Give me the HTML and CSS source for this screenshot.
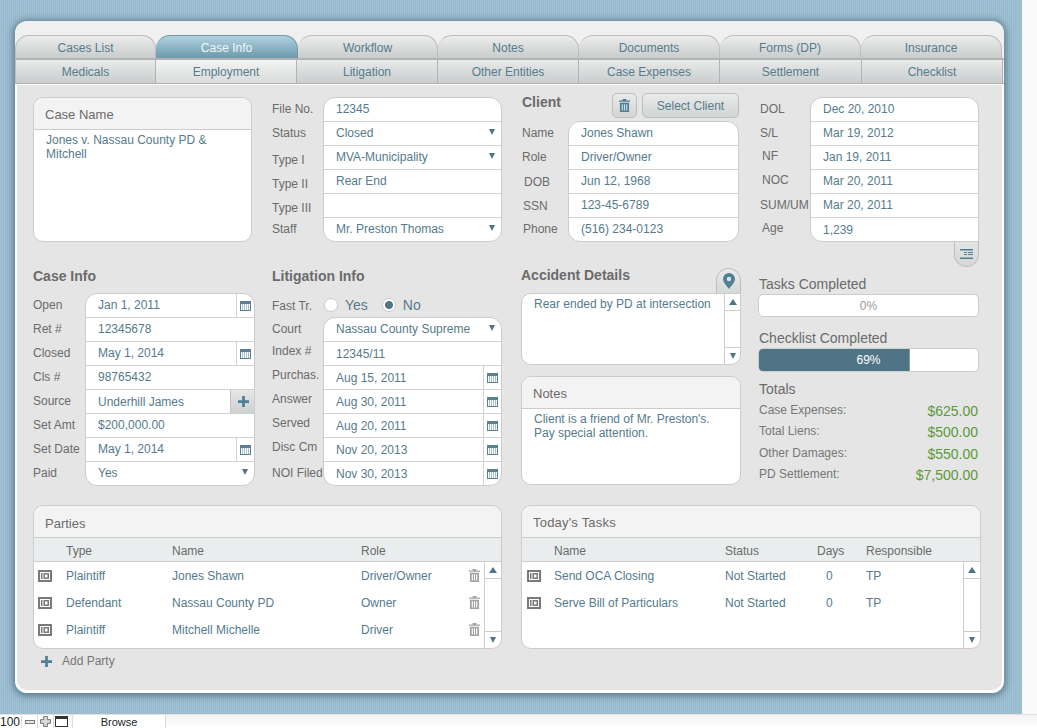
FILE: index.html
```html
<!DOCTYPE html>
<html lang="en">
<head>
<meta charset="utf-8">
<title>Case Info</title>
<link rel="stylesheet" href="styles.css">
</head>
<body>
<svg class="defs" width="0" height="0" aria-hidden="true">
  <symbol id="i-trash" viewBox="0 0 12 14"><path d="M4 0h4v1.5h4V3H0V1.5h4z"/><path fill-rule="evenodd" d="M1 4h10v10H1zM3 5.5v7h1.2v-7zM5.4 5.5v7h1.2v-7zM7.8 5.5v7H9v-7z"/></symbol>
  <symbol id="i-cal" viewBox="0 0 11 10"><path fill-rule="evenodd" d="M0 0h11v10H0zM1 3v6h9V3z"/><path d="M2 3.5h1v1H2zM4 3.5h1v1H4zM6 3.5h1v1H6zM8 3.5h1v1H8zM2 5.5h1v1H2zM4 5.5h1v1H4zM6 5.5h1v1H6zM8 5.5h1v1H8zM2 7.5h1v1H2zM4 7.5h1v1H4zM6 7.5h1v1H6zM8 7.5h1v1H8z"/></symbol>
  <symbol id="i-id" viewBox="0 0 14 12"><path fill-rule="evenodd" d="M0 0h14v12H0zM2 2v8h10V2zM3 3h1.5v6H3zM5.5 3H11v6H5.500zM7 4.500v3h2.500v-3z"/></symbol>
  <symbol id="i-plus" viewBox="0 0 12 12"><path d="M4.500 0h3v4.500H12v3H7.500V12h-3V7.500H0v-3h4.500z"/></symbol>
  <symbol id="i-pin" viewBox="0 0 12 16"><path fill-rule="evenodd" d="M6 0a6 6 0 0 1 6 6c0 3.500-4 7-6 10C4 13 0 9.500 0 6a6 6 0 0 1 6-6zM6 3.800a2.200 2.200 0 1 0 0 4.400 2.200 2.200 0 0 0 0-4.400z"/></symbol>
  <symbol id="i-lines" viewBox="0 0 13 10"><path d="M0 0h13v1.500H0zM4 3h3v1H4zM8 3h5v1H8zM4 5h3v1H4zM8 5h5v1H8zM0 8.500h13V10H0z"/></symbol>
</svg>

<div class="desktop">
  <main class="card">
    <nav class="tabs tabs-top">
      <a class="tab">Cases List</a>
      <a class="tab tab-on">Case Info</a>
      <a class="tab">Workflow</a>
      <a class="tab">Notes</a>
      <a class="tab">Documents</a>
      <a class="tab">Forms (DP)</a>
      <a class="tab">Insurance</a>
    </nav>
    <nav class="tabs tabs-sub">
      <a class="tab">Medicals</a>
      <a class="tab tab-near">Employment</a>
      <a class="tab">Litigation</a>
      <a class="tab">Other Entities</a>
      <a class="tab">Case Expenses</a>
      <a class="tab">Settlement</a>
      <a class="tab">Checklist</a>
    </nav>

    <div class="content">
      <section class="row-one">
        <div class="panel case-name">
          <header class="panel-head">Case Name</header>
          <p class="panel-text">Jones v. Nassau County PD &amp; Mitchell</p>
        </div>

        <div class="fields col-b1">
          <div class="labels">
            <span>File No.</span><span>Status</span><span class="d3">Type I</span><span class="d3">Type II</span><span class="d3">Type III</span><span>Staff</span>
          </div>
          <div class="stack">
            <div class="line"><span class="val">12345</span></div>
            <div class="line"><span class="val">Closed</span><i class="caret"></i></div>
            <div class="line"><span class="val">MVA-Municipality</span><i class="caret"></i></div>
            <div class="line"><span class="val">Rear End</span></div>
            <div class="line"></div>
            <div class="line"><span class="val">Mr. Preston Thomas</span><i class="caret"></i></div>
          </div>
        </div>

        <div class="client">
          <div class="client-head">
            <h2 class="heading">Client</h2>
            <button class="btn btn-icon"><svg class="ico-trash-btn"><use href="#i-trash"/></svg></button>
            <button class="btn btn-select">Select Client</button>
          </div>
          <div class="fields">
            <div class="labels labels-client">
              <span>Name</span><span>Role</span><span class="d1 in2">DOB</span><span class="d1 in1">SSN</span><span class="in1">Phone</span>
            </div>
            <div class="stack">
              <div class="line"><span class="val">Jones Shawn</span></div>
              <div class="line"><span class="val">Driver/Owner</span></div>
              <div class="line"><span class="val">Jun 12, 1968</span></div>
              <div class="line"><span class="val">123-45-6789</span></div>
              <div class="line"><span class="val">(516) 234-0123</span></div>
            </div>
          </div>
        </div>

        <div class="dates">
          <div class="fields">
            <div class="labels labels-dates">
              <span>DOL</span><span>S/L</span><span class="in2 u1">NF</span><span class="in2 u1">NOC</span><span>SUM/UM</span><span class="in2 u1">Age</span>
            </div>
            <div class="stack stack-square-br">
              <div class="line"><span class="val">Dec 20, 2010</span></div>
              <div class="line"><span class="val">Mar 19, 2012</span></div>
              <div class="line"><span class="val">Jan 19, 2011</span></div>
              <div class="line"><span class="val">Mar 20, 2011</span></div>
              <div class="line"><span class="val">Mar 20, 2011</span></div>
              <div class="line"><span class="val d1">1,239</span></div>
            </div>
          </div>
          <button class="hang-tab"><svg class="ico-lines"><use href="#i-lines"/></svg></button>
        </div>
      </section>

      <section class="row-two">
        <div>
          <h2 class="heading heading-sec">Case Info</h2>
          <div class="fields">
            <div class="labels labels-case">
              <span>Open</span><span>Ret #</span><span>Closed</span><span>Cls #</span><span>Source</span><span>Set Amt</span><span>Set Date</span><span>Paid</span>
            </div>
            <div class="stack">
              <div class="line line-side"><span class="val">Jan 1, 2011</span><span class="cell"><svg class="ico-cal"><use href="#i-cal"/></svg></span></div>
              <div class="line"><span class="val">12345678</span></div>
              <div class="line line-side"><span class="val">May 1, 2014</span><span class="cell"><svg class="ico-cal"><use href="#i-cal"/></svg></span></div>
              <div class="line"><span class="val">98765432</span></div>
              <div class="line line-side"><span class="val d1">Underhill James</span><span class="add-cell"><svg class="ico-plus"><use href="#i-plus"/></svg></span></div>
              <div class="line"><span class="val">$200,000.00</span></div>
              <div class="line line-side"><span class="val">May 1, 2014</span><span class="cell"><svg class="ico-cal"><use href="#i-cal"/></svg></span></div>
              <div class="line"><span class="val">Yes</span><i class="caret"></i></div>
            </div>
          </div>
        </div>

        <div>
          <h2 class="heading heading-sec">Litigation Info</h2>
          <div class="fields">
            <div class="labels">
              <span class="d1">Fast Tr.</span><span>Court</span><span class="u2">Index #</span><span class="u2">Purchas.</span><span class="u2">Answer</span><span class="u2">Served</span><span class="u2">Disc Cm</span><span>NOI Filed</span>
            </div>
            <div class="lit-right">
              <div class="radios">
                <span class="radio"></span><span class="radio-text">Yes</span>
                <span class="radio radio-on"></span><span class="radio-text">No</span>
              </div>
              <div class="stack">
                <div class="line"><span class="val">Nassau County Supreme</span><i class="caret"></i></div>
                <div class="line"><span class="val d1">12345/11</span></div>
                <div class="line line-side"><span class="val d1">Aug 15, 2011</span><span class="cell"><svg class="ico-cal"><use href="#i-cal"/></svg></span></div>
                <div class="line line-side"><span class="val d1">Aug 30, 2011</span><span class="cell"><svg class="ico-cal"><use href="#i-cal"/></svg></span></div>
                <div class="line line-side"><span class="val d1">Aug 20, 2011</span><span class="cell"><svg class="ico-cal"><use href="#i-cal"/></svg></span></div>
                <div class="line line-side"><span class="val d1">Nov 20, 2013</span><span class="cell"><svg class="ico-cal"><use href="#i-cal"/></svg></span></div>
                <div class="line line-side"><span class="val d1">Nov 30, 2013</span><span class="cell"><svg class="ico-cal"><use href="#i-cal"/></svg></span></div>
              </div>
            </div>
          </div>
        </div>

        <div>
          <div class="acc-head">
            <h2 class="heading heading-sec">Accident Details</h2>
            <button class="map-tab"><svg class="ico-pin"><use href="#i-pin"/></svg></button>
          </div>
          <div class="panel acc-box">
            <p class="acc-text">Rear ended by PD at intersection</p>
            <div class="scroll">
              <span class="scroll-up"><i class="tri-up"></i></span>
              <span class="scroll-mid"></span>
              <span class="scroll-down"><i class="caret"></i></span>
            </div>
          </div>
          <div class="panel notes">
            <header class="panel-head">Notes</header>
            <p class="panel-text">Client is a friend of Mr. Preston's. Pay special attention.</p>
          </div>
        </div>

        <aside class="stats">
          <div class="stat-label stat-first">Tasks Completed</div>
          <div class="bar bar-a"><span class="bar-text">0%</span></div>
          <div class="stat-label stat-second">Checklist Completed</div>
          <div class="bar bar-b"><span class="bar-fill" style="width:69%"></span><span class="bar-text bar-text-on">69%</span></div>
          <div class="stat-label stat-third">Totals</div>
          <div class="total"><span>Case Expenses:</span><b>$625.00</b></div>
          <div class="total"><span>Total Liens:</span><b>$500.00</b></div>
          <div class="total"><span>Other Damages:</span><b>$550.00</b></div>
          <div class="total"><span>PD Settlement:</span><b>$7,500.00</b></div>
        </aside>
      </section>

      <section class="row-three">
        <div>
          <div class="panel list">
            <header class="panel-head list-title list-title-low">Parties</header>
            <div class="list-cols cols-parties">
              <span></span><span>Type</span><span>Name</span><span>Role</span>
            </div>
            <div class="list-body">
              <div class="list-rows">
                <div class="list-row cols-parties"><svg class="ico-id"><use href="#i-id"/></svg><span>Plaintiff</span><span>Jones Shawn</span><span>Driver/Owner</span><svg class="ico-trash"><use href="#i-trash"/></svg></div>
                <div class="list-row cols-parties"><svg class="ico-id"><use href="#i-id"/></svg><span>Defendant</span><span>Nassau County PD</span><span>Owner</span><svg class="ico-trash"><use href="#i-trash"/></svg></div>
                <div class="list-row cols-parties"><svg class="ico-id"><use href="#i-id"/></svg><span>Plaintiff</span><span>Mitchell Michelle</span><span>Driver</span><svg class="ico-trash"><use href="#i-trash"/></svg></div>
              </div>
              <div class="scroll scroll-list">
                <span class="scroll-up"><i class="tri-up"></i></span>
                <span class="scroll-mid"></span>
                <span class="scroll-down"><i class="caret"></i></span>
              </div>
            </div>
          </div>
          <div class="add-party"><svg class="ico-add"><use href="#i-plus"/></svg><span>Add Party</span></div>
        </div>

        <div class="panel list">
          <header class="panel-head list-title list-title-wide">Today's Tasks</header>
          <div class="list-cols cols-tasks">
            <span></span><span>Name</span><span>Status</span><span>Days</span><span>Responsible</span>
          </div>
          <div class="list-body">
            <div class="list-rows">
              <div class="list-row cols-tasks"><svg class="ico-id"><use href="#i-id"/></svg><span>Send OCA Closing</span><span>Not Started</span><span class="days">0</span><span>TP</span></div>
              <div class="list-row cols-tasks"><svg class="ico-id"><use href="#i-id"/></svg><span>Serve Bill of Particulars</span><span>Not Started</span><span class="days">0</span><span>TP</span></div>
            </div>
            <div class="scroll scroll-list">
              <span class="scroll-up"><i class="tri-up"></i></span>
              <span class="scroll-mid"></span>
              <span class="scroll-down"><i class="caret"></i></span>
            </div>
          </div>
        </div>
      </section>
    </div>
  </main>
</div>

<footer class="statusbar">
  <span class="zoom-num">100</span>
  <span class="zoom-btn"><i class="sb-minus"></i></span>
  <span class="zoom-btn"><svg class="sb-plus" viewBox="0 0 12 12"><path d="M4 .5h4v3.500h3.500v4H8v3.500H4V8H.5V4H4z"/></svg></span>
  <span class="zoom-btn"><i class="sb-win"></i></span>
  <span class="mode">Browse</span>
</footer>
</body>
</html>
```

FILE: styles.css
```css
* { box-sizing: border-box; }

html, body { margin: 0; padding: 0; }

body {
  width: 1037px;
  height: 728px;
  overflow: hidden;
  background: #fafafa;
  font-family: "Liberation Sans", Arial, sans-serif;
  font-size: 12px;
  color: #6b6b6b;
}

.defs { position: absolute; }

h2, p { margin: 0; }

button { font-family: inherit; padding: 0; cursor: default; }

.desktop {
  width: 1022px;
  height: 714px;
  padding: 21px 0 0 15px;
  background: repeating-linear-gradient(90deg, #a2c1d4 0, #a2c1d4 1px, #97b9cd 1px, #97b9cd 2px);
  overflow: hidden;
}

.card {
  width: 989px;
  height: 672px;
  padding-top: 14px;
  border-radius: 12px;
  background: linear-gradient(#f0f0f0 0, #f0f0f0 62px, #fff 62px);
  box-shadow: 0 1px 7px 2px rgba(40, 70, 90, 0.55);
  overflow: hidden;
  display: flex;
  flex-direction: column;
}

/* Tabs */
.tabs { display: grid; color: #557b8c; }

.tabs-top {
  grid-template-columns: 141px 142px 140px 141px 141px 141px 141px;
  height: 25px;
  padding-right: 2px;
  border-bottom: 2px solid #b3b3b3;
}

.tabs-sub {
  grid-template-columns: 141px 141px 141px 141px 141px 142px 141px;
  height: 24px;
  padding-right: 1px;
  border-bottom: 1px solid #b3b3b3;
}

.tab {
  display: flex;
  align-items: center;
  justify-content: center;
  border-right: 1px solid #b3b3b3;
}

.tabs-top .tab {
  border: 1px solid #bdbdbd;
  border-bottom: 0;
  border-left: 0;
  border-radius: 14px 14px 0 0;
  background: linear-gradient(#ececec, #c9cccc);
  padding-top: 2px;
}

.tabs-top .tab:first-child { border-left: 1px solid #bdbdbd; }

.tabs-top .tab-on {
  background: linear-gradient(#b0d2e0, #6d99ac);
  border-color: #6f98aa;
  color: #f1f7fa;
}

.tabs-sub .tab { background: linear-gradient(#e9eaea, #c9cdcd); }
.tabs-sub .tab-near { background: linear-gradient(#f3f3f3, #d9dcdc); }
.tabs-sub .tab:first-child { border-left: 1px solid #bdbdbd; }

/* Content */
.content {
  flex: 1;
  margin: 1px 2px 3px 2px;
  padding: 8px 0 0 16px;
  background: #e5e5e5;
  border-bottom-left-radius: 10px;
  border-bottom-right-radius: 10px;
}

.row-one {
  display: grid;
  grid-template-columns: 219px 230px 217px 220px;
  column-gap: 20px;
  height: 175px;
}

.row-one > :nth-child(4) { margin-left: 1px; }

.row-two {
  display: grid;
  grid-template-columns: 222px 230px 220px 223px;
  column-gap: 17px;
  height: 217px;
}

.row-two > :nth-child(3) { margin-left: 2px; width: 220px; }
.row-two > :nth-child(4) { margin-left: 2px; }

.row-three {
  display: grid;
  grid-template-columns: 469px 460px;
  column-gap: 19px;
  margin-top: 20px;
}

.panel {
  background: #fff;
  border: 1px solid #ccc;
  border-radius: 10px;
  overflow: hidden;
}

.panel-head {
  height: 32px;
  padding: 2px 0 0 11px;
  display: flex;
  align-items: center;
  background: #f3f3f3;
  border-bottom: 1px solid #ccc;
  font-size: 13px;
  color: #6b6b6b;
}

.panel-text {
  padding: 3px 12px;
  color: #557b8c;
  line-height: 14px;
}

.case-name { margin-top: 4px; height: 145px; }

/* Fields */
.fields { display: flex; }

.col-b1 { margin-top: 4px; align-self: start; }

.labels {
  flex: 0 0 51px;
  display: flex;
  flex-direction: column;
  white-space: nowrap;
}

.labels span {
  display: block;
  height: 24px;
  line-height: 24px;
}

.labels-client { flex-basis: 46px; }
.labels-dates { flex-basis: 50px; }
.labels-case { flex-basis: 52px; }

.d1 { position: relative; top: 1px; }
.d3 { position: relative; top: 3px; }
.u1 { position: relative; top: -1px; }
.u2 { position: relative; top: -2px; }
.in1 { padding-left: 1px; }
.in2 { padding-left: 2px; }

.stack {
  flex: 1;
  min-width: 0;
  align-self: flex-start;
  background: #fff;
  border: 1px solid #ccc;
  border-radius: 12px;
  overflow: hidden;
}

.stack-square-br { border-bottom-right-radius: 0; }

.line {
  display: flex;
  align-items: center;
  height: 24px;
  padding: 0 0 1px 12px;
  border-bottom: 1px solid #d2d2d2;
  color: #557b8c;
}

.line:last-child { height: 23px; border-bottom: 0; }

.line-side { padding-bottom: 0; }

.line-side .val { position: relative; top: -1px; }
.line-side .val.d1 { top: 0; }

.val { flex: 1; white-space: nowrap; }

.caret {
  flex: none;
  width: 0;
  height: 0;
  margin: -3px 6px 0 0;
  border-left: 3.5px solid transparent;
  border-right: 3.5px solid transparent;
  border-top: 6px solid #4f7586;
}

.tri-up {
  display: block;
  width: 0;
  height: 0;
  border-left: 4px solid transparent;
  border-right: 4px solid transparent;
  border-bottom: 6px solid #4f7586;
}

.cell {
  flex: none;
  width: 18px;
  height: 100%;
  display: flex;
  align-items: center;
  justify-content: center;
  border-left: 1px solid #d2d2d2;
}

.ico-cal { width: 11px; height: 10px; fill: #5a8193; }

.add-cell {
  flex: none;
  width: 24px;
  height: 100%;
  padding-left: 1px;
  display: flex;
  align-items: center;
  justify-content: center;
  background: linear-gradient(#e6e8e8, #cdd0d0);
  border-left: 1px solid #c4c4c4;
}

.ico-plus { width: 11px; height: 11px; fill: #4f7f95; }

/* Client */
.client-head {
  display: flex;
  align-items: flex-start;
  height: 28px;
}

.heading {
  font-size: 14px;
  font-weight: bold;
  line-height: 16px;
  color: #6b6b6b;
}

.client-head .heading { flex: 1; margin-top: 1px; }

.btn {
  height: 25px;
  border: 1px solid #bdbdbd;
  border-radius: 5px;
  background: linear-gradient(#e9eaea, #d2d5d5);
  color: #557b8c;
  font-size: 12px;
}

.btn-icon {
  width: 25px;
  margin-right: 5px;
  display: flex;
  align-items: center;
  justify-content: center;
}

.ico-trash-btn { width: 11px; height: 13px; fill: #4f7f95; }

.btn-select { width: 97px; }

.dates { margin-top: 4px; }

.hang-tab {
  display: flex;
  align-items: center;
  justify-content: center;
  width: 25px;
  height: 26px;
  margin-left: auto;
  margin-top: -1px;
  border: 1px solid #bdbdbd;
  border-top: 0;
  border-radius: 0 0 13px 13px;
  background: linear-gradient(#e5e5e5, #d4d7d7);
}

.ico-lines { width: 13px; height: 10px; fill: #4f7f95; }

/* Row two */
.heading-sec { height: 25px; }

.lit-right { flex: 1; min-width: 0; }

.radios {
  height: 24px;
  display: flex;
  align-items: center;
  padding-left: 1px;
  font-size: 14px;
  color: #557b8c;
}

.radio {
  width: 14px;
  height: 14px;
  border: 1px solid #ccc;
  border-radius: 50%;
  background: #fff;
}

.radio-on {
  background: radial-gradient(circle, #4f7586 0, #4f7586 3.5px, #fff 4.5px);
}

.radio-text { margin: 0 14px 0 7px; }

.acc-head { display: flex; height: 25px; justify-content: space-between; }

.acc-head .heading-sec { margin-top: -1px; }

.map-tab {
  width: 25px;
  height: 25px;
  display: flex;
  align-items: center;
  justify-content: center;
  border: 1px solid #bdbdbd;
  border-bottom: 0;
  border-radius: 13px 13px 0 0;
  background: linear-gradient(#eaeaea, #d6d9d9);
}

.ico-pin { width: 12px; height: 16px; fill: #4f8095; }

.acc-box {
  display: flex;
  height: 72px;
  border-top-right-radius: 0;
}

.acc-text {
  flex: 1;
  padding: 3px 12px;
  line-height: 14px;
  color: #557b8c;
}

.scroll {
  flex: none;
  width: 16px;
  display: flex;
  flex-direction: column;
  border-left: 1px solid #ccc;
}

.scroll-up, .scroll-down {
  flex: none;
  height: 17px;
  display: flex;
  align-items: center;
  justify-content: center;
}

.scroll-up { border-bottom: 1px solid #ccc; }
.scroll-down { border-top: 1px solid #ccc; }
.scroll-down .caret { margin: 0; }
.scroll-mid { flex: 1; }

.notes { height: 109px; margin-top: 11px; }

.stats { display: flex; flex-direction: column; }

.stat-label { font-size: 14px; line-height: 16px; color: #6b6b6b; padding-left: 1px; }
.stat-first { margin-top: 8px; margin-bottom: 2px; }
.stat-second { margin-top: 13px; margin-bottom: 2px; }
.stat-third { margin-top: 9px; margin-bottom: 2px; }

.bar {
  position: relative;
  height: 23px;
  flex: none;
  border: 1px solid #ccc;
  border-radius: 5px;
  background: #fff;
  overflow: hidden;
  display: flex;
  align-items: center;
  justify-content: center;
}

.bar-b { height: 24px; }

.bar-fill {
  position: absolute;
  left: 0;
  top: 0;
  bottom: 0;
  background: #4f7485;
  border-right: 1px solid #7f9aa8;
}

.bar-text { position: relative; color: #999; }
.bar-text-on { color: #fff; }

.total {
  height: 21.5px;
  display: flex;
  justify-content: space-between;
  align-items: center;
  color: #777;
  padding: 0 1px;
}

.total b {
  position: relative;
  top: 1px;
  font-size: 14px;
  font-weight: normal;
  color: #5c9a38;
}

/* Lists */
.list { height: 144px; }

.list-title-low { padding-top: 3px; }
.list-title-wide { padding-top: 1px; letter-spacing: 0.2px; }

.list-cols {
  height: 24px;
  padding-top: 2px;
  background: #e9eded;
  border-bottom: 1px solid #ccc;
  align-items: center;
}

.cols-parties {
  display: grid;
  grid-template-columns: 32px 106px 189px 108px 15px;
}

.cols-tasks {
  display: grid;
  grid-template-columns: 32px 171px 92px 49px 100px;
}

.list-body { display: flex; height: 86px; }

.list-rows { flex: 1; min-width: 0; }

.list-row {
  height: 27px;
  align-items: center;
  color: #557b8c;
  white-space: nowrap;
}

.ico-id { width: 14px; height: 12px; margin-left: 4px; fill: #7a7a7a; }

.cols-tasks .ico-id { margin-left: 5px; }

.ico-trash { width: 11px; height: 13px; fill: #a3a3a3; }

.days { padding-left: 9px; }

.scroll-list { width: 17px; }

.add-party {
  display: flex;
  align-items: center;
  height: 24px;
  padding-left: 8px;
  color: #777;
}

.ico-add { width: 11px; height: 11px; margin-right: 10px; fill: #4f8095; }

/* Status bar */
.statusbar {
  height: 14px;
  display: flex;
  align-items: stretch;
  background: linear-gradient(#f3f3f3, #fff);
  border-top: 1px solid #e2e2e2;
  color: #222;
  font-size: 11px;
  line-height: 14px;
}

.zoom-num { width: 21px; background: #fff; font-size: 12px; }

.zoom-btn {
  width: 16px;
  display: flex;
  align-items: center;
  justify-content: center;
  background: #fff;
  border-left: 1px solid #ddd;
}

.sb-minus { width: 10px; height: 4px; background: #e8e8e8; border: 1px solid #777; }

.sb-plus { width: 11px; height: 11px; fill: #ddd; stroke: #666; stroke-width: 1; }

.sb-win { width: 13px; height: 11px; border: 1px solid #333; border-top-width: 3px; background: #fff; }

.mode {
  width: 94px;
  margin-left: 3px;
  text-align: center;
  background: #fff;
  border-left: 1px solid #ddd;
  border-right: 1px solid #ddd;
}
```
